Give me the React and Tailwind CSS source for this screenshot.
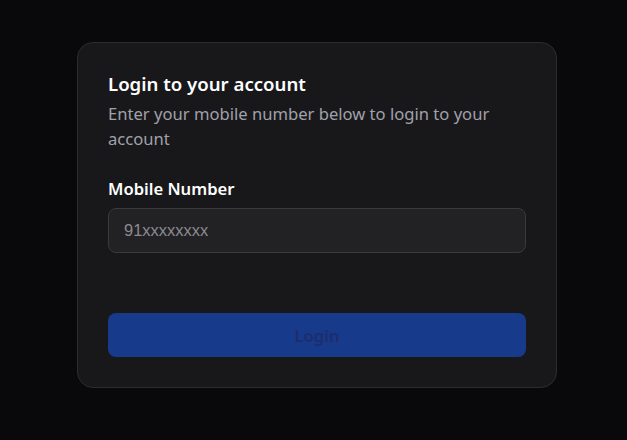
import React, { useState } from 'react';

const font = { fontFamily: '"Noto Sans", "Open Sans", sans-serif' };

export default function App() {
  const [mobile, setMobile] = useState('');

  return (
    <div className="min-h-screen w-full bg-[#09090b] flex justify-center pl-[7px] pt-[42px]" style={font}>
      <div className="w-[480px] h-[346px] rounded-2xl border border-[#2c2c30] bg-[#18181b] px-[30px] pt-[27px] pb-[30px] flex flex-col">
        <h2 className="text-[18.6px] leading-[28px] font-semibold text-white">Login to your account</h2>
        <p className="mt-[3px] text-[16.6px] leading-[25px] text-[#a1a1aa]">
          Enter your mobile number below to login to your account
        </p>

        <label className="mt-[26px] text-[16.6px] leading-[24px] font-semibold text-white">Mobile Number</label>
        <input
          value={mobile}
          onChange={(e) => setMobile(e.target.value)}
          placeholder="91xxxxxxxx"
          className="mt-[7px] h-[45px] w-full rounded-lg border border-[#3a3a3e] bg-[#222225] px-[15px] text-[16.5px] text-white placeholder:text-[#8a8a90] outline-none"
          style={{ fontFamily: '"Liberation Sans", Arial, sans-serif' }}
        />

        <button
          disabled={!mobile}
          className="mt-[60px] h-[45px] w-full rounded-lg bg-[#173a8b] pt-[3px] text-[16.6px] font-semibold text-[#1e2d6c]"
        >
          Login
        </button>
      </div>
    </div>
  );
}
